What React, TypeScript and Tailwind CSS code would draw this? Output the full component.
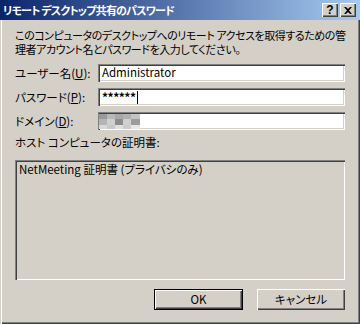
import React from "react";

const font = "[font-family:'Noto_Sans_CJK_JP',sans-serif] [font-feature-settings:'palt']";

const sunken =
  "shadow-[inset_1px_1px_0_#808080,inset_2px_2px_0_#404040,inset_-1px_-1px_0_#ffffff,inset_-2px_-2px_0_#d4d0c8]";
const raised =
  "shadow-[inset_1px_1px_0_#ffffff,inset_-1px_-1px_0_#404040,inset_-2px_-2px_0_#808080]";

function TitleBtn({ children }: { children: React.ReactNode }) {
  return (
    <div
      className={`w-[16px] h-[14px] bg-[#d4d0c8] ${raised} flex items-center justify-center text-black text-[12px] font-bold leading-none [font-family:'Liberation_Sans',sans-serif]`}
    >
      {children}
    </div>
  );
}

function Row({ label, children }: { label: React.ReactNode; children: React.ReactNode }) {
  return (
    <div className="flex items-center h-[18px]">
      <div className="w-[83px] text-[11.5px] leading-[13px] text-black whitespace-nowrap">{label}</div>
      <div className={`w-[247px] h-[18px] bg-white ${sunken} flex items-center pl-[4px]`}>{children}</div>
    </div>
  );
}

export default function App() {
  return (
    <div className={`w-[360px] h-[324px] flex flex-col bg-[#d4d0c8] ${font}`}>
      <div className="h-[20px] flex items-center bg-[linear-gradient(90deg,#0a246a,#a6caf0)] pl-[3px] pr-[4px]">
        <div className="flex-1 text-white font-bold text-[11px] tracking-[-0.8px] leading-none whitespace-nowrap">
          リモート デスクトップ共有のパスワード
        </div>
        <div className="flex gap-[2px]">
          <TitleBtn>?</TitleBtn>
          <TitleBtn>
            <svg width="8" height="7" viewBox="0 0 8 7">
              <path d="M0 0h2l2 2 2-2h2L5 3.5 8 7H6L4 5 2 7H0l3-3.5z" fill="#000" />
            </svg>
          </TitleBtn>
        </div>
      </div>
      <div className="flex-1 flex flex-col pl-[15px] shadow-[inset_1px_0_0_#d4d0c8,inset_2px_0_0_#ffffff,inset_-1px_-1px_0_#404040,inset_-2px_-2px_0_#808080]">
        <div className="mt-[8px] text-[11px] leading-[14px] text-black tracking-[-0.45px] whitespace-nowrap">
          このコンピュータのデスクトップへのリモート アクセスを取得するための管
          <br />
          理者アカウント名とパスワードを入力してください。
        </div>
        <div className="mt-[8px] flex flex-col gap-[6px]">
          <Row label={<>ユーザー名(<span className="underline">U</span>):</>}>
            <span className="text-[11.5px] leading-none text-black">Administrator</span>
          </Row>
          <Row label={<>パスワード(<span className="underline">P</span>):</>}>
            <span className="text-[12px] leading-none text-black font-bold tracking-[-0.5px]">******</span>
            <span className="w-px h-[13px] bg-black ml-[1px]" />
          </Row>
          <Row label={<>ドメイン(<span className="underline">D</span>):</>}>
            <div className="flex flex-col -ml-[3px]">
              <div className="flex">
                <div className="w-[8px] h-[5px] bg-[#9a9a9a]" />
                <div className="w-[8px] h-[5px] bg-[#b8b8b8]" />
                <div className="w-[8px] h-[5px] bg-[#a8a8a8]" />
                <div className="w-[8px] h-[5px] bg-[#b0b0b0]" />
                <div className="w-[9px] h-[5px] bg-[#c4c4c4]" />
              </div>
              <div className="flex">
                <div className="w-[8px] h-[6px] bg-[#b4b4b4]" />
                <div className="w-[8px] h-[6px] bg-[#cfcfcf]" />
                <div className="w-[8px] h-[6px] bg-[#8c8c8c]" />
                <div className="w-[8px] h-[6px] bg-[#d0d0d0]" />
                <div className="w-[9px] h-[6px] bg-[#9c9c9c]" />
              </div>
              <div className="flex">
                <div className="w-[8px] h-[4px] bg-[#d8d8d8]" />
                <div className="w-[8px] h-[4px] bg-[#c8c8c8]" />
                <div className="w-[8px] h-[4px] bg-[#e0e0e0]" />
                <div className="w-[8px] h-[4px] bg-[#cccccc]" />
                <div className="w-[9px] h-[4px] bg-[#e8e8e8]" />
              </div>
            </div>
          </Row>
        </div>
        <div className="mt-[6px] text-[11.5px] leading-[13px] text-black">ホスト コンピュータの証明書:</div>
        <div className={`mt-[11px] w-[330px] h-[120px] ${sunken} pl-[4px] pt-[3px]`}>
          <div className="text-[11.5px] leading-[13px] text-black">NetMeeting 証明書 (プライバシのみ)</div>
        </div>
        <div className="mt-[9px] flex justify-end gap-[14px] pr-[15px]">
          <div className="w-[89px] h-[21px] bg-[#d4d0c8] shadow-[inset_1px_1px_0_#000,inset_-1px_-1px_0_#000,inset_2px_2px_0_#ffffff,inset_-2px_-2px_0_#404040,inset_-3px_-3px_0_#808080] flex items-center justify-center text-[11.5px] text-black">
            OK
          </div>
          <div className={`w-[88px] h-[21px] bg-[#d4d0c8] ${raised} flex items-center justify-center text-[11.5px] text-black`}>
            キャンセル
          </div>
        </div>
      </div>
    </div>
  );
}
